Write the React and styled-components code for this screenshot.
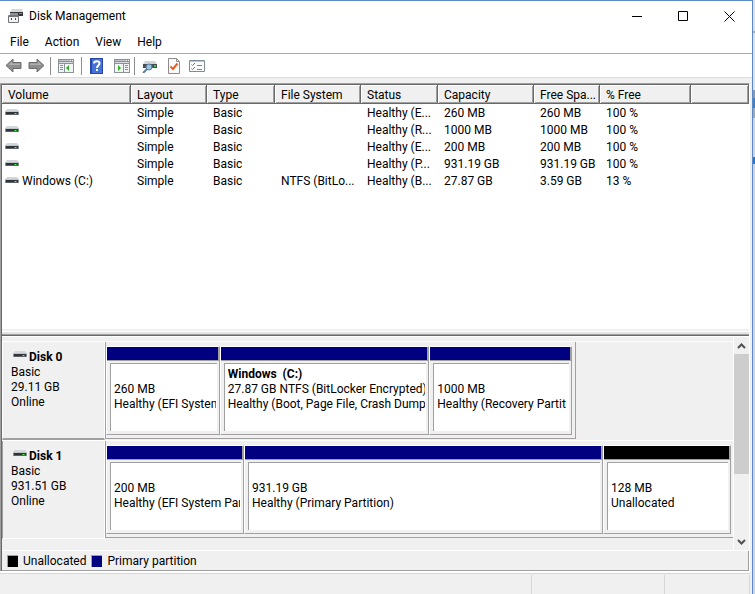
import React from "react";
import styled, { createGlobalStyle } from "styled-components";

const GlobalStyle = createGlobalStyle`
  *, *::before, *::after { box-sizing: border-box; }
  body {
    margin: 0;
    color: #000;
    background: #f0f0f0;
    font: 12px/15px "Segoe UI", Roboto, "Open Sans", sans-serif;
  }
  button { font: inherit; color: inherit; }
`;

const Desktop = styled.div`
  display: flex;
  min-height: 100vh;
`;

const Window = styled.main`
  flex: 1;
  min-width: 0;
  display: flex;
  flex-direction: column;
  background: #f0f0f0;
  border-top: 1px solid #5d8ac6;
  border-right: 1px solid #5d8ac6;
`;

const Backdrop = styled.div`
  width: 2px;
  background: linear-gradient(
    #dfe0e4 0 31px, #a9abb0 31px 33px, #dfe0e4 33px 90px, #8d99a8 90px 98px,
    #3f83c4 98px 108px, #a4a6aa 108px 118px, #d2d3d8 118px 157px,
    #1a7fd0 157px 164px, #d2d3d8 164px
  );
`;

const TitleBar = styled.header`
  display: flex;
  align-items: center;
  height: 30px;
  padding-left: 7px;
  background: #fff;
`;

const Title = styled.h1`
  flex: 1;
  margin: 0 0 0 5px;
  font-size: 12px;
  font-weight: 400;
`;

const CaptionButton = styled.button`
  display: grid;
  place-items: center;
  width: 46px;
  height: 30px;
  padding: 0;
  border: 0;
  background: none;
`;

const MenuBar = styled.nav`
  display: flex;
  align-items: center;
  gap: 16px;
  height: 22px;
  padding-left: 10px;
  background: #fff;
`;

const MenuButton = styled.button`
  padding: 0;
  border: 0;
  background: none;
`;

const Toolbar = styled.div`
  display: flex;
  align-items: center;
  height: 25px;
  padding: 0 4px;
  border-top: 1px solid #a5abb5;
  border-bottom: 1px solid #dcdcdc;
  background: #fff;
`;

const ToolButton = styled.button`
  display: grid;
  place-items: center;
  width: ${(p) => p.$width || 30}px;
  height: 20px;
  padding: 0;
  border: 0;
  background: none;
`;

const Separator = styled.span`
  width: 1px;
  height: 18px;
  background: #8d8d8d;
`;

const Client = styled.div`
  flex: 1;
  display: flex;
  flex-direction: column;
  margin: 5px 2px 0 0;
  border-top: 1px solid #a0a0a0;
  border-left: 1px solid #a0a0a0;
  border-right: 1px solid #fff;
`;

const Frame = styled.div`
  flex: 1;
  display: flex;
  flex-direction: column;
  border-top: 1px solid #696969;
  border-left: 1px solid #696969;
`;

const ListPane = styled.section`
  flex: 1;
  min-height: 244px;
  background: #fff;
`;

const VolumeTable = styled.table`
  width: 100%;
  table-layout: fixed;
  border-collapse: separate;
  border-spacing: 0;

  td, th {
    height: 17px;
    padding: 2px 2px 0 6px;
    font-weight: 400;
    text-align: left;
    overflow: hidden;
    white-space: nowrap;
    text-overflow: ellipsis;
  }
  td:first-child { padding-left: 3px; }
`;

const Column = styled.col`
  width: ${(p) => (p.$width ? `${p.$width}px` : "auto")};
`;

const HeaderCell = styled.th`
  && { height: 19px; }
  background: #f0f0f0;
  border-right: 1px solid #696969;
  border-bottom: 1px solid #696969;
  box-shadow: inset 1px 1px #fff, inset -1px -1px #a0a0a0;
`;

const VolumeName = styled.span`
  display: flex;
  align-items: center;
  gap: 3px;
`;

const Splitter = styled.div`
  height: 8px;
  background: linear-gradient(
    #f0f0f0 0 2px, #fff 2px 3px, #e3e3e3 3px 5px, #a0a0a0 5px 6px, #696969 6px 7px, #fff 7px
  );
`;

const GraphPane = styled.section`
  display: flex;
  height: 214px;
  border-bottom: 1px solid #fff;
`;

const DiskList = styled.div`
  flex: 1;
  min-width: 0;
  padding-top: 4px;
`;

const DiskRow = styled.div`
  display: flex;
  height: 99px;
  border-top: 1px solid #fff;
`;

const DiskLabel = styled.div`
  width: 103px;
  padding: 8px 0 0 8px;
  border-left: 1px solid ${(p) => (p.$selected ? "#fff" : "#a0a0a0")};
  border-right: 1px solid #fff;
  border-bottom: ${(p) => (p.$selected ? "2px solid #a0a0a0" : "1px solid #fff")};
`;

const DiskName = styled.h2`
  display: flex;
  gap: 2px;
  margin: 0;
  padding-left: 2px;
  font-size: 12px;
  line-height: 15px;
`;

const Line = styled.div`
  height: 15px;
  overflow: hidden;
  white-space: pre;
  font-weight: ${(p) => (p.$bold ? 700 : 400)};
`;

const TrackArea = styled.div`
  flex: 1;
  min-width: 0;
`;

const Track = styled.div`
  display: grid;
  grid-template-columns: ${(p) => p.$columns};
  width: ${(p) => p.$width};
  height: 97px;
  padding: 4px ${(p) => (p.$open ? 2 : 3)}px 3px 0;
  border-left: 1px solid #a0a0a0;
  border-bottom: 1px solid #a0a0a0;
  border-right: ${(p) => (p.$open ? "0" : "1px solid #a0a0a0")};
`;

const Partition = styled.div`
  display: flex;
  flex-direction: column;
  min-width: 0;
  border-left: 1px solid #fff;
  border-top: 1px solid #fff;
  border-right: 1px solid #a0a0a0;
  border-bottom: 1px solid #a0a0a0;
`;

const Stripe = styled.div`
  height: 14px;
  background: ${(p) => p.$color};
  border-right: 1px solid #a0a0a0;
  border-bottom: 1px solid #a0a0a0;
`;

const PartitionBody = styled.div`
  flex: 1;
  margin: 2px 2px 3px 3px;
  padding: 3px 1px 0 3px;
  border-top: 1px solid #a0a0a0;
  border-left: 1px solid #a0a0a0;
  background: #fff;
`;

const Scrollbar = styled.div`
  display: flex;
  flex-direction: column;
  width: 16px;
  border-left: 1px solid #fff;
`;

const ScrollButton = styled.button`
  display: grid;
  place-items: center;
  height: 17px;
  padding: 0;
  border: 0;
  background: none;
`;

const ScrollTrack = styled.div`
  flex: 1;
`;

const Thumb = styled.div`
  height: 67%;
  background: #cdcdcd;
`;

const Legend = styled.footer`
  display: flex;
  align-items: center;
  gap: 5px;
  height: 20px;
  padding: 1px 0 0 5px;
  border-right: 1px solid #a0a0a0;
  border-bottom: 1px solid #a0a0a0;
`;

const Swatch = styled.span`
  width: 11px;
  height: 12px;
  background: ${(p) => p.$color};
  border-top: 1px solid #a0a0a0;
  border-left: 1px solid #a0a0a0;
`;

const StatusBar = styled.div`
  display: grid;
  grid-template-columns: 1fr 133px 85px;
  grid-template-rows: 1px 1fr;
  height: 23px;
  margin-right: 2px;
  border-top: 2px solid #fff;
`;

const StatusCell = styled.div`
  margin-top: 1px;
  border-right: 1px solid #d7d7d7;
`;

const StatusEdge = styled.div`
  grid-column: 1 / -1;
  background: #d7d7d7;
`;

function DriveIcon() {
  return (
    <svg width="14" height="11" viewBox="0 0 14 11" aria-hidden="true">
      <path d="M2 1H12L13 2L14 4H0L1 2Z" fill="#d3d6da" />
      <rect y="3" width="14" height="1" fill="#c2c6ca" />
      <rect y="4" width="14" height="3" fill="#8b9095" />
      <rect x="1" y="4" width="12" height="2" fill="#2f3438" />
      <rect x="1" y="6" width="12" height="1" fill="#5c6166" />
      <rect x="9" y="5" width="3" height="1" fill="#26a826" />
      <rect x="10" y="5" width="1" height="1" fill="#4cff4c" />
    </svg>
  );
}

function AppIcon() {
  return (
    <svg width="17" height="16" viewBox="0 0 17 16" aria-hidden="true">
      <path d="M5 1H15L16 4H3Z" fill="#d6d8da" />
      <path d="M3 4H16V8H3Z" fill="#33373a" />
      <rect x="12" y="5" width="3" height="1" fill="#28c840" />
      <path d="M3 5H11V8H3Z" fill="#8f9397" />
      <rect x="1" y="7" width="11" height="8" rx="1" fill="#737679" />
      <rect x="2" y="9" width="9" height="5" fill="#f2f2f2" />
      <rect x="4" y="10" width="1" height="2" fill="#505356" />
      <rect x="8" y="10" width="1" height="2" fill="#505356" />
    </svg>
  );
}

function ArrowIcon({ forward }) {
  return (
    <svg width="17" height="15" viewBox="0 0 17 15" aria-hidden="true">
      <path
        d={forward ? "M16 7.5L9 1V4.5H1V10.5H9V14Z" : "M1 7.5L8 1V4.5H16V10.5H8V14Z"}
        fill="#8e8e8e"
        stroke="#6c6c6c"
      />
      <path d={forward ? "M2 5.5H10V3.5L13.5 7H2Z" : "M3.5 7L7 3.5V5.5H15V7Z"} fill="#b0b0b0" />
    </svg>
  );
}

function PaneIcon({ right }) {
  const lines = right ? "M11 6.5H14M11 8.5H14M11 10.5H14" : "M2 6.5H5M2 8.5H5M2 10.5H5";
  return (
    <svg width="16" height="14" viewBox="0 0 16 14" aria-hidden="true">
      <rect width="16" height="14" fill="#8b929a" />
      <rect x="1" y="1" width="11" height="1" fill="#b9bfc6" />
      <rect x="12" y="1" width="1" height="1" fill="#fff" />
      <rect x="14" y="1" width="1" height="1" fill="#fff" />
      <rect x="1" y="3" width="14" height="1" fill="#d8dbdf" />
      <rect x="1" y="5" width="14" height="8" fill="#f3f4f5" />
      <rect x={right ? 9 : 6} y="5" width="1" height="8" fill="#8b929a" />
      <path d={lines} stroke="#7f93a8" />
      <path d={right ? "M4 6V12L7 9Z" : "M11 6V12L8 9Z"} fill="#2fb41e" />
    </svg>
  );
}

function HelpIcon() {
  return (
    <svg width="13" height="16" viewBox="0 0 13 16" aria-hidden="true">
      <rect width="13" height="16" fill="#2849a8" />
      <rect x="2" y="1" width="10" height="14" fill="#4672d8" />
      <path d="M4 5.5C4 2.5 9.5 2.5 9.5 5.5C9.5 7.5 7 7.5 7 10" fill="none" stroke="#fff" strokeWidth="2" />
      <rect x="6" y="11" width="2" height="2" fill="#fff" />
    </svg>
  );
}

function RescanIcon() {
  return (
    <svg width="16" height="14" viewBox="0 0 16 14" aria-hidden="true">
      <path d="M3 2H13L15 5H1Z" fill="#d2d5d8" />
      <rect x="1" y="5" width="14" height="4" fill="#484d52" />
      <rect x="12" y="6" width="2" height="2" fill="#30c840" />
      <path d="M5 10L1 14" stroke="#5e7f9e" strokeWidth="2" />
      <circle cx="7" cy="8" r="3" fill="#9cc3df" stroke="#557c9f" />
    </svg>
  );
}

function CheckPageIcon() {
  return (
    <svg width="12" height="16" viewBox="0 0 12 16" aria-hidden="true">
      <path d="M.5 .5H8.5L11.5 3.5V15.5H.5Z" fill="#fafafa" stroke="#8c8c8c" />
      <path d="M8.5 .5V3.5H11.5" fill="none" stroke="#8c8c8c" />
      <path d="M2.5 8.5L5 11L9.5 5.5" fill="none" stroke="#ef5a22" strokeWidth="2" />
    </svg>
  );
}

function ChecklistIcon() {
  return (
    <svg width="16" height="12" viewBox="0 0 16 12" aria-hidden="true">
      <path d="M.5 .5H15.5V11.5H.5Z" fill="#fbfbfb" stroke="#7e8b98" />
      <path d="M1 1.5H15" stroke="#bfc6cc" />
      <path d="M2.5 4.5L3.5 5.5L6 3M2.5 8.5L3.5 9.5L6 7" fill="none" stroke="#2887ce" />
      <path d="M8 5.5H13M8 9.5H13" stroke="#7b858f" />
    </svg>
  );
}

function Chevron({ down }) {
  return (
    <svg width="9" height="6" viewBox="0 0 9 6" aria-hidden="true">
      <path d={down ? "M1 1L4.5 4.5L8 1" : "M1 5L4.5 1.5L8 5"} fill="none" stroke="#505050" strokeWidth="2" />
    </svg>
  );
}

const columns = [
  ["Volume", 129], ["Layout", 76], ["Type", 68], ["File System", 86], ["Status", 77],
  ["Capacity", 96], ["Free Spa...", 66], ["% Free", 91], ["", 0],
];

const volumes = [
  ["", "Simple", "Basic", "", "Healthy (E...", "260 MB", "260 MB", "100 %"],
  ["", "Simple", "Basic", "", "Healthy (R...", "1000 MB", "1000 MB", "100 %"],
  ["", "Simple", "Basic", "", "Healthy (E...", "200 MB", "200 MB", "100 %"],
  ["", "Simple", "Basic", "", "Healthy (P...", "931.19 GB", "931.19 GB", "100 %"],
  ["Windows (C:)", "Simple", "Basic", "NTFS (BitLo...", "Healthy (B...", "27.87 GB", "3.59 GB", "13 %"],
];

const NAVY = "#000080";
const BLACK = "#000";

const disks = [
  {
    name: "Disk 0", size: "29.11 GB", selected: true, width: "75%", columns: "114fr 210fr 143fr",
    partitions: [
      { size: "260 MB", status: "Healthy (EFI System", color: NAVY },
      { name: "Windows  (C:)", size: "27.87 GB NTFS (BitLocker Encrypted)", status: "Healthy (Boot, Page File, Crash Dump", color: NAVY },
      { size: "1000 MB", status: "Healthy (Recovery Partit", color: NAVY },
    ],
  },
  {
    name: "Disk 1", size: "931.51 GB", open: true, width: "100%", columns: "138fr 359fr 128fr",
    partitions: [
      { size: "200 MB", status: "Healthy (EFI System Par", color: NAVY },
      { size: "931.19 GB", status: "Healthy (Primary Partition)", color: NAVY },
      { size: "128 MB", status: "Unallocated", color: BLACK },
    ],
  },
];

export default function App() {
  return (
    <Desktop>
      <GlobalStyle />
      <Window>
        <TitleBar>
          <AppIcon />
          <Title>Disk Management</Title>
          <CaptionButton aria-label="Minimize">
            <svg width="10" height="10"><path d="M0 5.5H10" stroke="#000" /></svg>
          </CaptionButton>
          <CaptionButton aria-label="Maximize">
            <svg width="10" height="10"><path d="M.5 .5H9.5V9.5H.5Z" fill="none" stroke="#000" /></svg>
          </CaptionButton>
          <CaptionButton aria-label="Close">
            <svg width="11" height="11"><path d="M.5 .5L10.5 10.5M10.5 .5L.5 10.5" stroke="#000" /></svg>
          </CaptionButton>
        </TitleBar>
        <MenuBar>
          {["File", "Action", "View", "Help"].map((m) => <MenuButton key={m}>{m}</MenuButton>)}
        </MenuBar>
        <Toolbar>
          <ToolButton $width={18} aria-label="Back"><ArrowIcon /></ToolButton>
          <ToolButton $width={28} aria-label="Forward"><ArrowIcon forward /></ToolButton>
          <Separator />
          <ToolButton aria-label="Console tree"><PaneIcon /></ToolButton>
          <Separator />
          <ToolButton $width={28} aria-label="Help"><HelpIcon /></ToolButton>
          <ToolButton $width={24} aria-label="Action pane"><PaneIcon right /></ToolButton>
          <Separator />
          <ToolButton aria-label="Rescan disks"><RescanIcon /></ToolButton>
          <ToolButton $width={18} aria-label="Properties"><CheckPageIcon /></ToolButton>
          <ToolButton $width={28} aria-label="Settings"><ChecklistIcon /></ToolButton>
        </Toolbar>
        <Client>
          <Frame>
            <ListPane>
              <VolumeTable>
                <colgroup>
                  {columns.map(([name, width]) => <Column key={name} $width={width} />)}
                </colgroup>
                <thead>
                  <tr>{columns.map(([name]) => <HeaderCell key={name}>{name}</HeaderCell>)}</tr>
                </thead>
                <tbody>
                  {volumes.map(([name, ...cells], i) => (
                    <tr key={i}>
                      <td><VolumeName><DriveIcon />{name}</VolumeName></td>
                      {cells.map((c, j) => <td key={j}>{c}</td>)}
                    </tr>
                  ))}
                </tbody>
              </VolumeTable>
            </ListPane>
            <Splitter />
            <GraphPane>
              <DiskList>
                {disks.map((d) => (
                  <DiskRow key={d.name}>
                    <DiskLabel $selected={d.selected}>
                      <DiskName><DriveIcon />{d.name}</DiskName>
                      <Line>Basic</Line>
                      <Line>{d.size}</Line>
                      <Line>Online</Line>
                    </DiskLabel>
                    <TrackArea>
                      <Track $width={d.width} $columns={d.columns} $open={d.open}>
                        {d.partitions.map((p) => (
                          <Partition key={p.size}>
                            <Stripe $color={p.color} />
                            <PartitionBody>
                              <Line $bold>{p.name}</Line>
                              <Line>{p.size}</Line>
                              <Line>{p.status}</Line>
                            </PartitionBody>
                          </Partition>
                        ))}
                      </Track>
                    </TrackArea>
                  </DiskRow>
                ))}
              </DiskList>
              <Scrollbar>
                <ScrollButton aria-label="Scroll up"><Chevron /></ScrollButton>
                <ScrollTrack><Thumb /></ScrollTrack>
                <ScrollButton aria-label="Scroll down"><Chevron down /></ScrollButton>
              </Scrollbar>
            </GraphPane>
            <Legend>
              <Swatch $color={BLACK} />Unallocated
              <Swatch $color={NAVY} />Primary partition
            </Legend>
          </Frame>
        </Client>
        <StatusBar>
          <StatusEdge />
          <StatusCell /><StatusCell /><StatusCell />
        </StatusBar>
      </Window>
      <Backdrop />
    </Desktop>
  );
}
